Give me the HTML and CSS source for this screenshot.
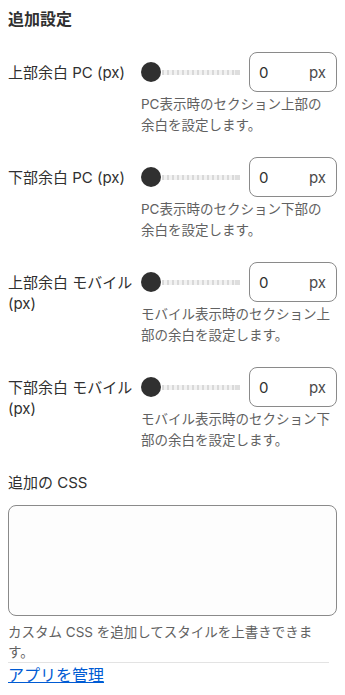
FILE: index.html
```html
<!DOCTYPE html>
<html lang="ja">
<head>
<meta charset="utf-8">
<title>追加設定</title>
<link rel="stylesheet" href="styles.css">
</head>
<body>
<div class="panel">
  <h2 class="title">追加設定</h2>
  <div class="fields">
    <div class="field">
      <label class="field-label">上部余白 PC (px)</label>
      <div class="field-control">
        <div class="control-row">
          <div class="range"><span class="range-thumb"></span><span class="range-track"></span></div>
          <div class="number"><span class="number-value">0</span><span class="number-suffix">px</span></div>
        </div>
        <p class="help">PC表示時のセクション上部の余白を設定します。</p>
      </div>
    </div>
    <div class="field">
      <label class="field-label">下部余白 PC (px)</label>
      <div class="field-control">
        <div class="control-row">
          <div class="range"><span class="range-thumb"></span><span class="range-track"></span></div>
          <div class="number"><span class="number-value">0</span><span class="number-suffix">px</span></div>
        </div>
        <p class="help">PC表示時のセクション下部の余白を設定します。</p>
      </div>
    </div>
    <div class="field">
      <label class="field-label">上部余白 モバイル (px)</label>
      <div class="field-control">
        <div class="control-row">
          <div class="range"><span class="range-thumb"></span><span class="range-track"></span></div>
          <div class="number"><span class="number-value">0</span><span class="number-suffix">px</span></div>
        </div>
        <p class="help">モバイル表示時のセクション上部の余白を設定します。</p>
      </div>
    </div>
    <div class="field">
      <label class="field-label">下部余白 モバイル (px)</label>
      <div class="field-control">
        <div class="control-row">
          <div class="range"><span class="range-thumb"></span><span class="range-track"></span></div>
          <div class="number"><span class="number-value">0</span><span class="number-suffix">px</span></div>
        </div>
        <p class="help">モバイル表示時のセクション下部の余白を設定します。</p>
      </div>
    </div>
    <div class="css-field">
      <label class="css-label">追加の CSS</label>
      <div class="textarea"></div>
      <p class="css-help">カスタム CSS を追加してスタイルを上書きできます。</p>
    </div>
  </div>
  <div class="footer">
    <a class="manage-link" href="#">アプリを管理</a>
  </div>
</div>
</body>
</html>
```

FILE: styles.css
```css
body {
  margin: 8px;
  background: #ffffff;
  font-family: Inter, "Noto Sans CJK JP", sans-serif;
  color: #303030;
}

.panel {
  display: flex;
  flex-direction: column;
}

.title {
  margin: 0 0 22px;
  font-size: 16px;
  line-height: 22px;
  font-weight: 700;
  color: #303030;
}

.fields {
  display: flex;
  flex-direction: column;
  gap: 21px;
}

.field {
  display: flex;
  align-items: flex-start;
}

.field-label {
  width: 133px;
  flex: none;
  padding-top: 10px;
  font-size: 15px;
  line-height: 21px;
  color: #303030;
}

.field-control {
  flex: 1;
  min-width: 0;
}

.control-row {
  display: flex;
  align-items: center;
  gap: 9px;
  height: 40px;
}

.range {
  flex: 1;
  display: flex;
  align-items: center;
}

.range-thumb {
  width: 20px;
  height: 20px;
  border-radius: 50%;
  background: #303030;
  flex: none;
}

.range-track {
  flex: 1;
  height: 5px;
  margin-left: 1px;
  background:
    linear-gradient(#dedede, #dedede) right / 5px 100% no-repeat,
    repeating-linear-gradient(90deg, #d9d9d9 0 2px, #f2f2f2 2px 5px);
}

.number {
  width: 88px;
  height: 40px;
  box-sizing: border-box;
  border: 1px solid #8a8a8a;
  border-radius: 8px;
  display: flex;
  align-items: center;
  justify-content: space-between;
  padding: 0 10px 0 9px;
  font-size: 15px;
}

.number-value {
  color: #303030;
}

.number-suffix {
  color: #4a4a4a;
}

.help {
  margin: 2px 0 0;
  padding-right: 4px;
  font-size: 13.5px;
  line-height: 21px;
  color: #616161;
}

.css-field {
  display: flex;
  flex-direction: column;
}

.css-label {
  font-size: 15px;
  line-height: 21px;
  color: #303030;
}

.textarea {
  margin-top: 12px;
  height: 111px;
  box-sizing: border-box;
  border: 1px solid #8a8a8a;
  border-radius: 8px;
  background: #fdfdfd;
}

.css-help {
  margin: 6px 0 0;
  font-size: 13.5px;
  line-height: 20px;
  color: #616161;
}

.footer {
  border-top: 1px solid #e3e3e3;
  margin-right: 8px;
}

.manage-link {
  display: inline-block;
  font-size: 16px;
  line-height: 24px;
  color: #005bd3;
  text-decoration: underline;
}
```
